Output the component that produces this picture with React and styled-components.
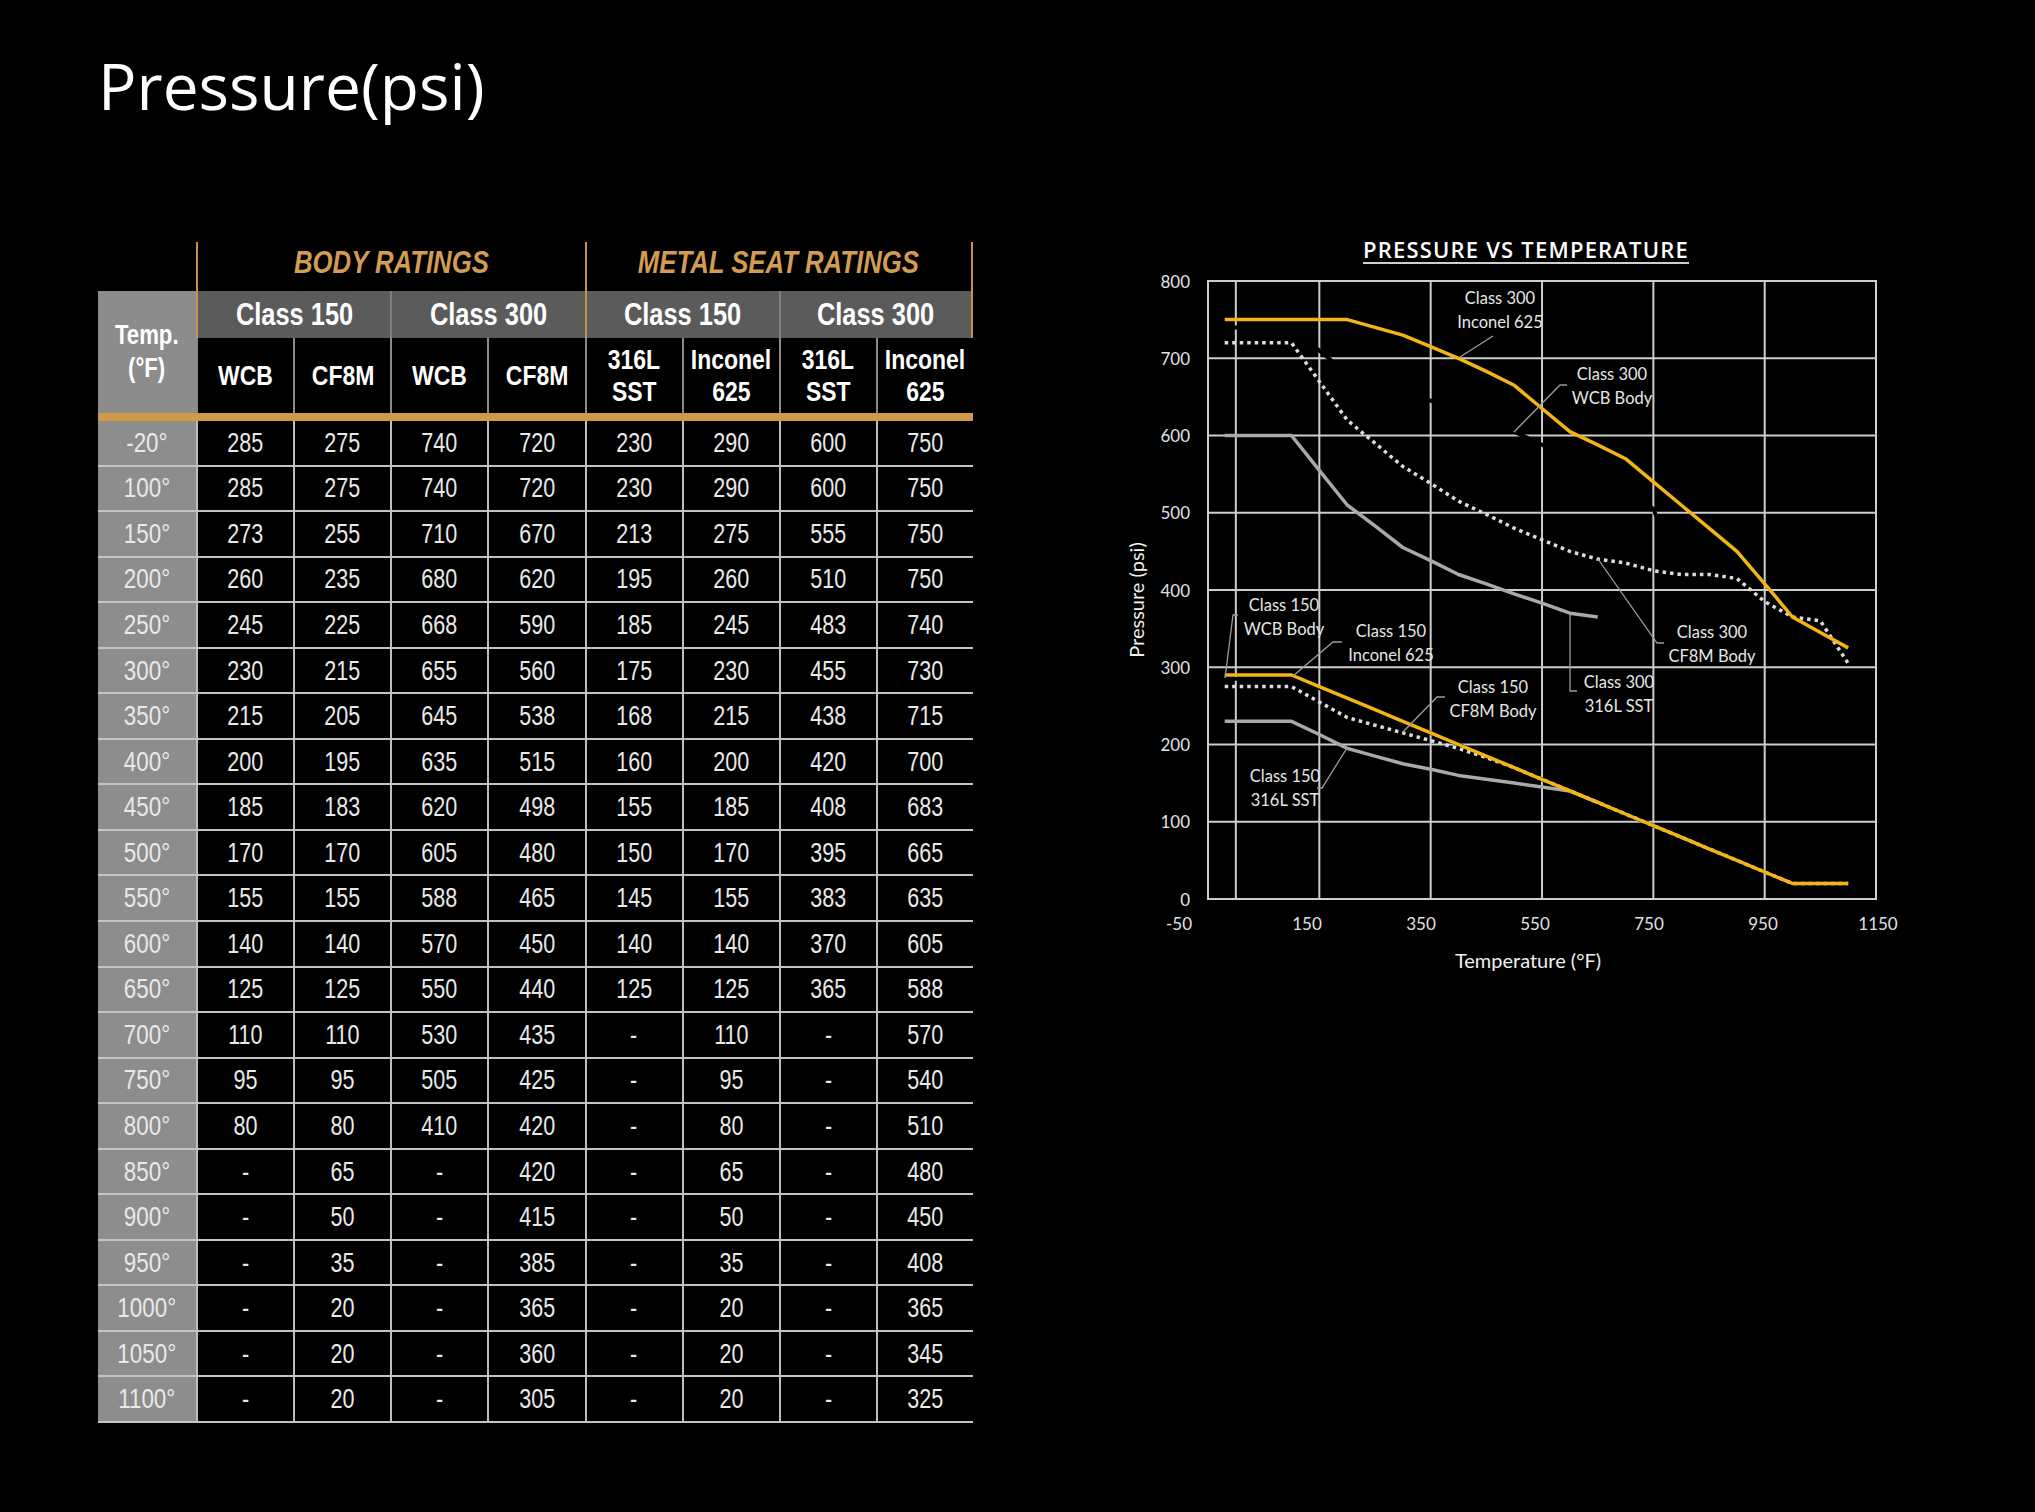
import React from 'react';
import styled, { createGlobalStyle } from 'styled-components';

const gold = '#c9924a';
const goldText = '#d29c52';
const tableFont = '"Liberation Sans", Arial, sans-serif';

const rows = [
  ['-20°', 285, 275, 740, 720, 230, 290, 600, 750],
  ['100°', 285, 275, 740, 720, 230, 290, 600, 750],
  ['150°', 273, 255, 710, 670, 213, 275, 555, 750],
  ['200°', 260, 235, 680, 620, 195, 260, 510, 750],
  ['250°', 245, 225, 668, 590, 185, 245, 483, 740],
  ['300°', 230, 215, 655, 560, 175, 230, 455, 730],
  ['350°', 215, 205, 645, 538, 168, 215, 438, 715],
  ['400°', 200, 195, 635, 515, 160, 200, 420, 700],
  ['450°', 185, 183, 620, 498, 155, 185, 408, 683],
  ['500°', 170, 170, 605, 480, 150, 170, 395, 665],
  ['550°', 155, 155, 588, 465, 145, 155, 383, 635],
  ['600°', 140, 140, 570, 450, 140, 140, 370, 605],
  ['650°', 125, 125, 550, 440, 125, 125, 365, 588],
  ['700°', 110, 110, 530, 435, '-', 110, '-', 570],
  ['750°', 95, 95, 505, 425, '-', 95, '-', 540],
  ['800°', 80, 80, 410, 420, '-', 80, '-', 510],
  ['850°', '-', 65, '-', 420, '-', 65, '-', 480],
  ['900°', '-', 50, '-', 415, '-', 50, '-', 450],
  ['950°', '-', 35, '-', 385, '-', 35, '-', 408],
  ['1000°', '-', 20, '-', 365, '-', 20, '-', 365],
  ['1050°', '-', 20, '-', 360, '-', 20, '-', 345],
  ['1100°', '-', 20, '-', 305, '-', 20, '-', 325],
];

const GlobalStyle = createGlobalStyle`
  html, body {
    margin: 0;
    background: #000;
  }
  body {
    font-family: "Open Sans", sans-serif;
  }
`;

const Page = styled.div`
  width: 2035px;
  min-height: 1512px;
  box-sizing: border-box;
  padding: 54px 0 0 98px;
  background: #000;
  color: #fff;
`;

const Title = styled.h1`
  margin: 0;
  font-family: "Open Sans", sans-serif;
  font-weight: 500;
  font-size: 64px;
  line-height: 64px;
  color: #fff;
`;

const Content = styled.div`
  display: flex;
  align-items: flex-start;
  margin-top: 117px;
`;

/* ---------- table ---------- */

// the printed table uses a condensed face; squeeze a regular one horizontally
const Squeeze = styled.span`
  display: inline-block;
  white-space: nowrap;
  transform: scaleX(${(p) => p.$s || 0.78});
`;

const TableWrap = styled.div`
  width: 875px;
  margin-top: 7px;
  font-family: ${tableFont};
`;

const RatingsRow = styled.div`
  display: grid;
  grid-template-columns: 98px minmax(0, 1fr) minmax(0, 1fr);
  height: 49px;
`;

const RatingTitle = styled.div`
  display: flex;
  align-items: center;
  justify-content: center;
  padding-bottom: 7px;
  border-left: 2px solid ${gold};
  border-right: ${(p) => (p.$last ? `2px solid ${gold}` : 'none')};
  color: ${goldText};
  font-weight: 700;
  font-style: italic;
  font-size: 31px;
`;

const HeadGrid = styled.div`
  display: grid;
  grid-template-columns: 98px repeat(8, minmax(0, 1fr));
  grid-template-rows: 47px 75px;
`;

const TempHead = styled.div`
  grid-row: 1 / span 2;
  background: #8c8c8c;
  display: flex;
  flex-direction: column;
  align-items: center;
  justify-content: center;
  color: #fff;
  font-weight: 700;
  font-size: 27px;
  line-height: 33px;
`;

const ClassCell = styled.div`
  grid-column: span 2;
  background: #5b5b5b;
  display: flex;
  align-items: center;
  justify-content: center;
  border-left: 2px solid ${(p) => (p.$gold ? gold : '#7d7d7d')};
  border-right: ${(p) => (p.$end ? `2px solid ${gold}` : 'none')};
  color: #fff;
  font-weight: 700;
  font-size: 31px;
`;

const MatCell = styled.div`
  display: flex;
  flex-direction: column;
  align-items: center;
  justify-content: center;
  border-left: 2px solid #8a8a8a;
  color: #fff;
  font-weight: 700;
  font-size: 28px;
  line-height: 32px;
`;

const Band = styled.div`
  height: 8px;
  background: #d0994a;
`;

const DataRow = styled.div`
  display: grid;
  grid-template-columns: 98px repeat(8, minmax(0, 1fr));
  height: 45.55px;
  box-sizing: border-box;
  border-bottom: 2px solid #c3c3c3;
`;

const Cell = styled.div`
  display: flex;
  align-items: center;
  justify-content: center;
  color: #e9e9e9;
  font-size: 28px;
  border-left: ${(p) => (p.$temp ? 'none' : '2px solid #bdbdbd')};
  background: ${(p) => (p.$temp ? '#8d8d8d' : '#000')};
`;

const Mat = ({ lines }) => (
  <MatCell>
    {lines.map((l) => (
      <Squeeze key={l} $s={0.82}>{l}</Squeeze>
    ))}
  </MatCell>
);

const PressureTable = () => (
  <TableWrap>
    <RatingsRow>
      <div />
      <RatingTitle><Squeeze $s={0.83}>BODY RATINGS</Squeeze></RatingTitle>
      <RatingTitle $last><Squeeze $s={0.83}>METAL SEAT RATINGS</Squeeze></RatingTitle>
    </RatingsRow>
    <HeadGrid>
      <TempHead>
        <Squeeze $s={0.82}>Temp.</Squeeze>
        <Squeeze $s={0.82}>(°F)</Squeeze>
      </TempHead>
      <ClassCell $gold><Squeeze $s={0.82}>Class 150</Squeeze></ClassCell>
      <ClassCell><Squeeze $s={0.82}>Class 300</Squeeze></ClassCell>
      <ClassCell $gold><Squeeze $s={0.82}>Class 150</Squeeze></ClassCell>
      <ClassCell $end><Squeeze $s={0.82}>Class 300</Squeeze></ClassCell>
      <Mat lines={['WCB']} />
      <Mat lines={['CF8M']} />
      <Mat lines={['WCB']} />
      <Mat lines={['CF8M']} />
      <Mat lines={['316L', 'SST']} />
      <Mat lines={['Inconel', '625']} />
      <Mat lines={['316L', 'SST']} />
      <Mat lines={['Inconel', '625']} />
    </HeadGrid>
    <Band />
    {rows.map((row) => (
      <DataRow key={row[0]}>
        {row.map((v, i) => (
          <Cell key={i} $temp={i === 0}>
            <Squeeze $s={i === 0 ? 0.8 : 0.77}>{v}</Squeeze>
          </Cell>
        ))}
      </DataRow>
    ))}
  </TableWrap>
);

/* ---------- chart ---------- */

const ChartCol = styled.div`
  margin-left: 137px;
  width: 800px;
  display: flex;
  flex-direction: column;
`;

const ChartTitle = styled.div`
  padding-left: 32px;
  margin-bottom: 7px;
  text-align: center;
  font-family: "Open Sans", sans-serif;
  font-weight: 600;
  font-size: 22px;
  letter-spacing: 1.2px;
  line-height: 28px;
  color: #fff;
  text-decoration: underline;
  text-decoration-thickness: 2px;
  text-underline-offset: 4px;
  text-decoration-color: #cfcfcf;
`;

const Plot = styled.svg`
  display: block;
`;

const AxisText = styled.text`
  font-family: Lato, "Open Sans", sans-serif;
  font-size: 17px;
  fill: #e2e2e2;
`;

const AxisTitle = styled.text`
  font-family: Lato, "Open Sans", sans-serif;
  font-size: 20px;
  fill: #f0f0f0;
`;

const NoteText = styled.text`
  font-family: Lato, "Open Sans", sans-serif;
  font-size: 16.5px;
  fill: #e6e6e6;
`;

const px = (t) => 1208 + (t + 50) * 0.5567;
const py = (p) => 899 - p * 0.7725;
const temps = rows.map((r) => parseInt(r[0], 10));

const seriesPoints = (col) =>
  rows
    .map((r, i) => (r[col] === '-' ? null : `${px(temps[i]).toFixed(1)},${py(r[col]).toFixed(1)}`))
    .filter(Boolean)
    .join(' ');

const xTicks = [
  ['-50', 1179], ['150', 1307], ['350', 1421], ['550', 1535],
  ['750', 1649], ['950', 1763], ['1150', 1878],
];

const notes = [
  { x: 1500, y: 298, lines: ['Class 300', 'Inconel 625'], leader: '1493,336 1460,357' },
  { x: 1612, y: 374, lines: ['Class 300', 'WCB Body'], leader: '1567,385 1560,385 1514,432' },
  { x: 1712, y: 632, lines: ['Class 300', 'CF8M Body'], leader: '1598,559 1657,643 1664,643' },
  { x: 1619, y: 682, lines: ['Class 300', '316L SST'], leader: '1570,613 1570,691 1577,691' },
  { x: 1284, y: 605, lines: ['Class 150', 'WCB Body'], leader: '1238,615 1233,615 1225,678' },
  { x: 1391, y: 631, lines: ['Class 150', 'Inconel 625'], leader: '1342,642 1333,642 1293,676' },
  { x: 1493, y: 687, lines: ['Class 150', 'CF8M Body'], leader: '1445,697 1437,697 1402,733' },
  { x: 1285, y: 776, lines: ['Class 150', '316L SST'], leader: '1317,788 1322,788 1347,748' },
];

const PressureChart = () => (
  <ChartCol>
    <ChartTitle>PRESSURE VS TEMPERATURE</ChartTitle>
    <Plot width="800" height="720" viewBox="1110 270 800 720">
      <g stroke="#cdcdcd" strokeWidth="2">
        {[100, 200, 300, 400, 500, 600, 700].map((p) => (
          <line key={p} x1="1208" x2="1876" y1={py(p)} y2={py(p)} />
        ))}
        {[0, 150, 350, 550, 750, 950].map((t) => (
          <line key={t} x1={px(t)} x2={px(t)} y1="281" y2="899" />
        ))}
        <rect x="1208" y="281" width="668" height="618" fill="none" />
      </g>

      {[0, 100, 200, 300, 400, 500, 600, 700, 800].map((p) => (
        <AxisText key={p} x="1190" y={py(p)} textAnchor="end" dominantBaseline="central">{p}</AxisText>
      ))}
      {xTicks.map(([l, x]) => (
        <AxisText key={l} x={x} y="923" textAnchor="middle" dominantBaseline="central">{l}</AxisText>
      ))}
      <AxisTitle x="1528" y="960" textAnchor="middle" dominantBaseline="central">Temperature (°F)</AxisTitle>
      <AxisTitle x="1136" y="600" textAnchor="middle" dominantBaseline="central" transform="rotate(-90 1136 600)">
        Pressure (psi)
      </AxisTitle>

      <g fill="none" strokeLinejoin="round">
        <polyline points={seriesPoints(3)} stroke="#000" strokeWidth="4" />
        <polyline points={seriesPoints(1)} stroke="#000" strokeWidth="4" />
        <polyline points={seriesPoints(7)} stroke="#a9a9a9" strokeWidth="3.5" />
        <polyline points={seriesPoints(5)} stroke="#a9a9a9" strokeWidth="3.5" />
        <polyline points={seriesPoints(4)} stroke="#dcdcdc" strokeWidth="3.5" strokeDasharray="3.5 4" />
        <polyline points={seriesPoints(2)} stroke="#dcdcdc" strokeWidth="3.5" strokeDasharray="3.5 4" />
        <polyline points={seriesPoints(8)} stroke="#f3b414" strokeWidth="3.5" />
        <polyline points={seriesPoints(6)} stroke="#f3b414" strokeWidth="3.5" />
      </g>

      {notes.map((n) => (
        <g key={n.lines.join()}>
          <polyline points={n.leader} fill="none" stroke="#9c9c9c" strokeWidth="1.3" />
          {n.lines.map((l, i) => (
            <NoteText key={l} x={n.x} y={n.y + i * 24} textAnchor="middle" dominantBaseline="central">{l}</NoteText>
          ))}
        </g>
      ))}
    </Plot>
  </ChartCol>
);

const App = () => (
  <Page>
    <GlobalStyle />
    <Title>Pressure(psi)</Title>
    <Content>
      <PressureTable />
      <PressureChart />
    </Content>
  </Page>
);

export default App;
